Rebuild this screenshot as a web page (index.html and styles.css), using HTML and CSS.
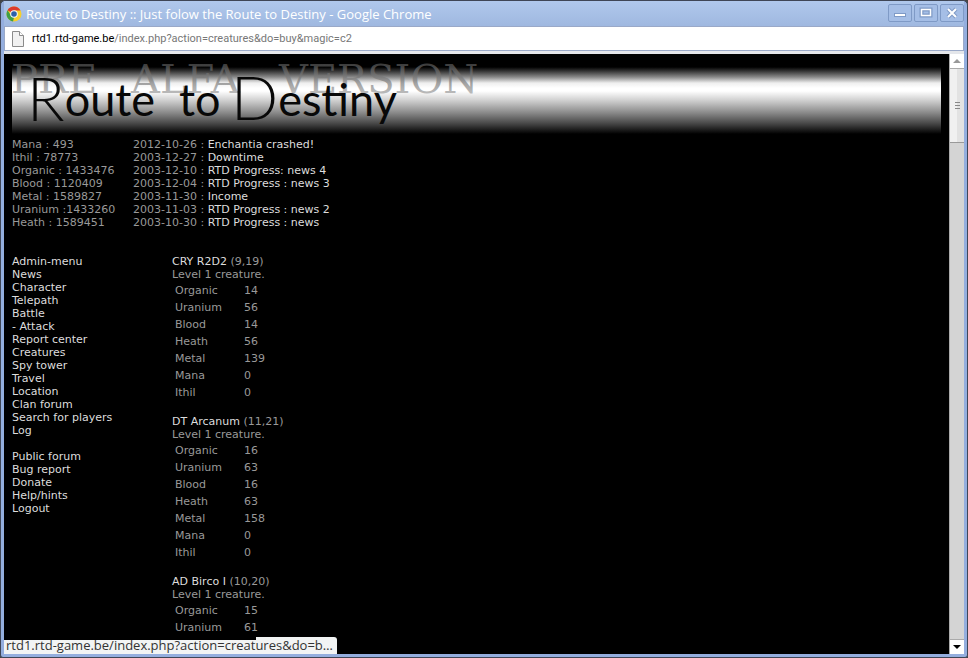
FILE: index.html
```html
<!DOCTYPE html>
<html lang="en">
<head>
<meta charset="utf-8">
<title>Route to Destiny</title>
<link rel="stylesheet" href="styles.css">
</head>
<body>
<div class="window">
  <header class="titlebar">
    <svg class="chrome" viewBox="0 0 16 16" aria-hidden="true">
      <circle cx="8" cy="8" r="7.500" fill="#f6cf2c"/>
      <path d="M8 8 1.500 4.250A7.500 7.500 0 0 1 14.500 4.500H8z" fill="#dd3a2c"/>
      <path d="M1.500 4.250 5.200 9.800 8 11.500 7 15.430A7.500 7.500 0 0 1 1.500 4.250z" fill="#3f9e46"/>
      <circle cx="8" cy="8" r="3.800" fill="#f4f7fb"/>
      <circle cx="8" cy="8" r="2.800" fill="#2c5fa8"/>
    </svg>
    <h1 class="title">Route to Destiny :: Just folow the Route to Destiny - Google Chrome</h1>
    <div class="controls">
      <button class="control" aria-label="Minimize"><svg viewBox="0 0 22 16"><rect x="5.500" y="8.500" width="11" height="3" fill="#fff" stroke="#7f9ac6"/></svg></button>
      <button class="control" aria-label="Maximize"><svg viewBox="0 0 22 16"><rect x="6.500" y="4.500" width="9" height="6" fill="none" stroke="#7f9ac6" stroke-width="4"/><rect x="6.500" y="4.500" width="9" height="6" fill="none" stroke="#fff" stroke-width="1.500"/></svg></button>
      <button class="control" aria-label="Close"><svg viewBox="0 0 22 16"><path d="m7 4 8 8m0-8-8 8" stroke="#7f9ac6" stroke-width="4"/><path d="m7 4 8 8m0-8-8 8" stroke="#fff" stroke-width="2"/></svg></button>
    </div>
  </header>
  <div class="address">
    <svg class="page-icon" viewBox="0 0 12 16" aria-hidden="true"><path d="M.5.500h7l4 4v11H.5z" fill="#f1f1f1" stroke="#8b8b8b"/><path d="M7.500.500v4h4" fill="#fff" stroke="#8b8b8b"/></svg>
    <span class="url"><span class="host">rtd1.rtd-game.be</span>/index.php?action=creatures&amp;do=buy&amp;magic=c2</span>
  </div>
  <div class="viewport">
    <main class="page">
      <div class="banner">
        <svg class="logo" width="500" height="76" role="img" aria-label="Route to Destiny">
          <defs>
            <linearGradient id="ghost" gradientUnits="userSpaceOnUse" x1="0" y1="2" x2="0" y2="31">
              <stop offset="0" stop-color="#4c4c4c"/>
              <stop offset=".5" stop-color="#808080"/>
              <stop offset="1" stop-color="#aaa"/>
            </linearGradient>
          </defs>
          <g class="ghost-text" fill="url(#ghost)">
            <text x="-1" y="31">PRE</text>
            <text x="119" y="31">ALFA</text>
            <text x="267" y="31">VERSION</text>
          </g>
          <g class="brand">
            <text x="15" y="54"><tspan class="initial" y="59">R</tspan><tspan y="54">oute</tspan></text>
            <text x="167" y="54">to</text>
            <text x="219" y="58"><tspan class="initial">D</tspan><tspan y="54">estiny</tspan></text>
          </g>
        </svg>
      </div>
      <section class="summary">
        <ul class="stats">
          <li>Mana : 493</li><li>Ithil : 78773</li><li>Organic : 1433476</li><li>Blood : 1120409</li><li>Metal : 1589827</li><li>Uranium :1433260</li><li>Heath : 1589451</li>
        </ul>
        <ul class="news">
          <li>2012-10-26 : <a href="#">Enchantia crashed!</a></li>
          <li>2003-12-27 : <a href="#">Downtime</a></li>
          <li>2003-12-10 : <a href="#">RTD Progress: news 4</a></li>
          <li>2003-12-04 : <a href="#">RTD Progress : news 3</a></li>
          <li>2003-11-30 : <a href="#">Income</a></li>
          <li>2003-11-03 : <a href="#">RTD Progress : news 2</a></li>
          <li>2003-10-30 : <a href="#">RTD Progress : news</a></li>
        </ul>
      </section>
      <div class="columns">
        <nav class="menu">
          <ul>
            <li><a href="#">Admin-menu</a></li><li><a href="#">News</a></li><li><a href="#">Character</a></li><li><a href="#">Telepath</a></li><li><a href="#">Battle</a></li><li><a href="#">- Attack</a></li><li><a href="#">Report center</a></li><li><a href="#">Creatures</a></li><li><a href="#">Spy tower</a></li><li><a href="#">Travel</a></li><li><a href="#">Location</a></li><li><a href="#">Clan forum</a></li><li><a href="#">Search for players</a></li><li><a href="#">Log</a></li>
          </ul>
          <ul>
            <li><a href="#">Public forum</a></li><li><a href="#">Bug report</a></li><li><a href="#">Donate</a></li><li><a href="#">Help/hints</a></li><li><a href="#">Logout</a></li>
          </ul>
        </nav>
        <div class="creatures">
          <section class="creature">
            <p><a href="#">CRY R2D2</a> (9,19)</p>
            <p>Level 1 creature.</p>
            <table>
              <tr><th>Organic</th><td>14</td></tr>
              <tr><th>Uranium</th><td>56</td></tr>
              <tr><th>Blood</th><td>14</td></tr>
              <tr><th>Heath</th><td>56</td></tr>
              <tr><th>Metal</th><td>139</td></tr>
              <tr><th>Mana</th><td>0</td></tr>
              <tr><th>Ithil</th><td>0</td></tr>
            </table>
          </section>
          <section class="creature">
            <p><a href="#">DT Arcanum</a> (11,21)</p>
            <p>Level 1 creature.</p>
            <table>
              <tr><th>Organic</th><td>16</td></tr>
              <tr><th>Uranium</th><td>63</td></tr>
              <tr><th>Blood</th><td>16</td></tr>
              <tr><th>Heath</th><td>63</td></tr>
              <tr><th>Metal</th><td>158</td></tr>
              <tr><th>Mana</th><td>0</td></tr>
              <tr><th>Ithil</th><td>0</td></tr>
            </table>
          </section>
          <section class="creature">
            <p><a href="#">AD Birco I</a> (10,20)</p>
            <p>Level 1 creature.</p>
            <table>
              <tr><th>Organic</th><td>15</td></tr>
              <tr><th>Uranium</th><td>61</td></tr>
            </table>
          </section>
        </div>
      </div>
    </main>
    <div class="scrollbar">
      <button class="arrow" aria-label="Scroll up"><svg viewBox="0 0 8 4"><path d="M0 4h8L4 0z" fill="#999"/></svg></button>
      <div class="thumb"><i></i><i></i><i></i></div>
      <button class="arrow arrow-down" aria-label="Scroll down"><svg viewBox="0 0 8 4"><path d="M0 0h8L4 4z" fill="#000"/></svg></button>
    </div>
    <div class="status">rtd1.rtd-game.be/index.php?action=creatures&amp;do=b…</div>
  </div>
</div>
</body>
</html>
```
FILE: styles.css
```css
* { box-sizing: border-box; }
body { margin: 0; background: #444; }
ul, p, h1 { margin: 0; padding: 0; list-style: none; font: inherit; }
button { padding: 0; }

.window {
  height: 100vh;
  display: flex;
  flex-direction: column;
  padding: 0 3px 3px;
  background: #94aede;
  border: 1px solid #3f4656;
  border-radius: 5px 5px 3px 3px;
}

.titlebar {
  flex: none;
  height: 25px;
  display: flex;
  align-items: center;
  gap: 4px;
  padding: 0 0 0 2px;
  background: linear-gradient(#b0c8ec, #9fb8e0);
  color: #fff;
  font: 13px/24px "Open Sans", "Noto Sans", sans-serif;
}
.chrome { width: 16px; height: 16px; }
.title { flex: 1; min-width: 0; white-space: nowrap; overflow: hidden; }
.controls { display: flex; gap: 2px; padding-bottom: 2px; }
.control {
  width: 24px;
  height: 18px;
  background: #a5bee6;
  border: 1px solid #7f9ac6;
  border-radius: 2px;
}
.control svg { display: block; width: 22px; height: 16px; }

.address {
  flex: none;
  height: 25px;
  display: flex;
  align-items: center;
  gap: 8px;
  padding: 0 7px;
  background: #fff;
  border: 1px solid #9aa9c8;
  font: 11px/16px Roboto, sans-serif;
  color: #777;
}
.page-icon { width: 12px; height: 16px; }
.host { color: #000; }

.viewport {
  position: relative;
  flex: 1;
  min-height: 0;
  display: flex;
  border-top: 3px solid #e4e6ea;
  background: #000;
}
.page {
  flex: 1;
  min-width: 0;
  padding: 8px;
  overflow: hidden;
  color: #999;
  font: 11px/13px "DejaVu Sans", sans-serif;
}
.page a { color: #ddd; text-decoration: none; }

.banner {
  height: 76px;
  background: linear-gradient(#000 5px, #333 9px, #888 15px, #eee 21px, #fff 26px, #fff 29px, #ccc 39px, #888 51px, #444 62px, #000 72px);
}
.logo { display: block; overflow: visible; }
.ghost-text { font: 40px "DejaVu Serif", serif; opacity: .8; }
.brand { font: 45px Lato, sans-serif; fill: #080808; }
.initial { font-size: 62px; font-weight: 300; }

.summary { display: flex; }
.stats { width: 121px; }

.columns { display: flex; margin-top: 26px; }
.menu { width: 160px; }
.menu ul + ul { margin-top: 13px; }
.creature { margin-bottom: 13px; }
.creature table { border-spacing: 2px; }
.creature th, .creature td { padding: 1px; text-align: left; font-weight: normal; }
.creature th { width: 67px; }

.scrollbar {
  flex: none;
  width: 15px;
  display: flex;
  flex-direction: column;
  background: #d4d4d4;
  border-left: 1px solid #aaa;
}
.arrow {
  height: 15px;
  display: flex;
  align-items: center;
  justify-content: center;
  background: #fff;
  border: 0;
  border-bottom: 1px solid #aaa;
}
.arrow svg { width: 8px; height: 4px; }
.arrow-down { margin-top: auto; border-top: 1px solid #aaa; border-bottom: 0; }
.thumb {
  height: 74px;
  display: flex;
  flex-direction: column;
  align-items: center;
  justify-content: center;
  gap: 2px;
  background: linear-gradient(90deg, #f0f0f0 50%, #e2e2e2 50%);
  border-bottom: 1px solid #999;
}
.thumb i { width: 5px; height: 1px; background: #888; }

.status {
  position: absolute;
  left: 0;
  bottom: 0;
  padding: 0 4px 0 2px;
  background: linear-gradient(#000, #000) 0 0 / 252px 3px no-repeat #f2f4f4;
  border-radius: 0 3px 0 0;
  color: #333;
  font: 13px/17px "Open Sans", "Noto Sans", sans-serif;
}
```
